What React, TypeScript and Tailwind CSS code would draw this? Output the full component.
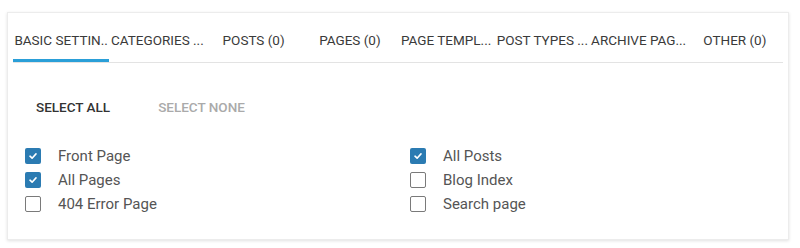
import React from "react";

const tabs = [
  "BASIC SETTIN..",
  "CATEGORIES ...",
  "POSTS (0)",
  "PAGES (0)",
  "PAGE TEMPL...",
  "POST TYPES ...",
  "ARCHIVE PAG...",
  "OTHER (0)",
];

function Box({ checked }: { checked: boolean }) {
  if (checked) {
    return (
      <span className="flex h-[16px] w-[16px] items-center justify-center rounded-[2px] bg-[#2b7bb2]">
        <svg width="10" height="10" viewBox="0 0 10 10" fill="none">
          <path d="M2 5.2 L4.1 7.2 L8 2.9" stroke="white" strokeWidth="1.6" strokeLinecap="round" strokeLinejoin="round" />
        </svg>
      </span>
    );
  }
  return <span className="block h-[16px] w-[16px] rounded-[2px] border-[1.5px] border-[#7a7a7a] bg-white" />;
}

function Row({ label, checked }: { label: string; checked: boolean }) {
  return (
    <div className="flex h-[24px] items-center gap-[17px]">
      <Box checked={checked} />
      <span className="text-[15px] text-[#555]">{label}</span>
    </div>
  );
}

export default function App() {
  return (
    <div className="h-[248px] w-[800px] bg-white pl-[7px] pt-[12px] font-['Roboto',sans-serif]">
      <div className="h-[228px] w-[782px] border border-[#ececec] bg-white px-[5px] shadow-[0_1px_3px_rgba(0,0,0,0.12)]">
        <div className="grid h-[50px] grid-cols-8 items-end border-b border-[#e3e3e3]">
          {tabs.map((t, i) => (
            <div
              key={t}
              className={
                i === 0
                  ? "flex h-[44px] items-center justify-center whitespace-nowrap border-b-[3px] border-[#2a9fd8] pt-[3px] text-[13.5px] text-[#3a3a3a]"
                  : "flex h-[44px] items-center justify-center whitespace-nowrap border-b-[3px] border-transparent pt-[3px] text-[13.5px] text-[#3a3a3a]"
              }
            >
              {t}
            </div>
          ))}
        </div>
        <div className="flex h-[80px] items-center gap-[16px] pl-[7px] pt-[8px]">
          <span className="px-[16px] text-[13.5px] font-medium text-[#333]">SELECT ALL</span>
          <span className="px-[16px] text-[13.5px] font-medium text-[#aaa]">SELECT NONE</span>
        </div>
        <div className="grid grid-cols-[385px_1fr] pl-[12px] pt-[1px]">
          <div className="flex flex-col">
            <Row label="Front Page" checked />
            <Row label="All Pages" checked />
            <Row label="404 Error Page" checked={false} />
          </div>
          <div className="flex flex-col">
            <Row label="All Posts" checked />
            <Row label="Blog Index" checked={false} />
            <Row label="Search page" checked={false} />
          </div>
        </div>
      </div>
    </div>
  );
}
